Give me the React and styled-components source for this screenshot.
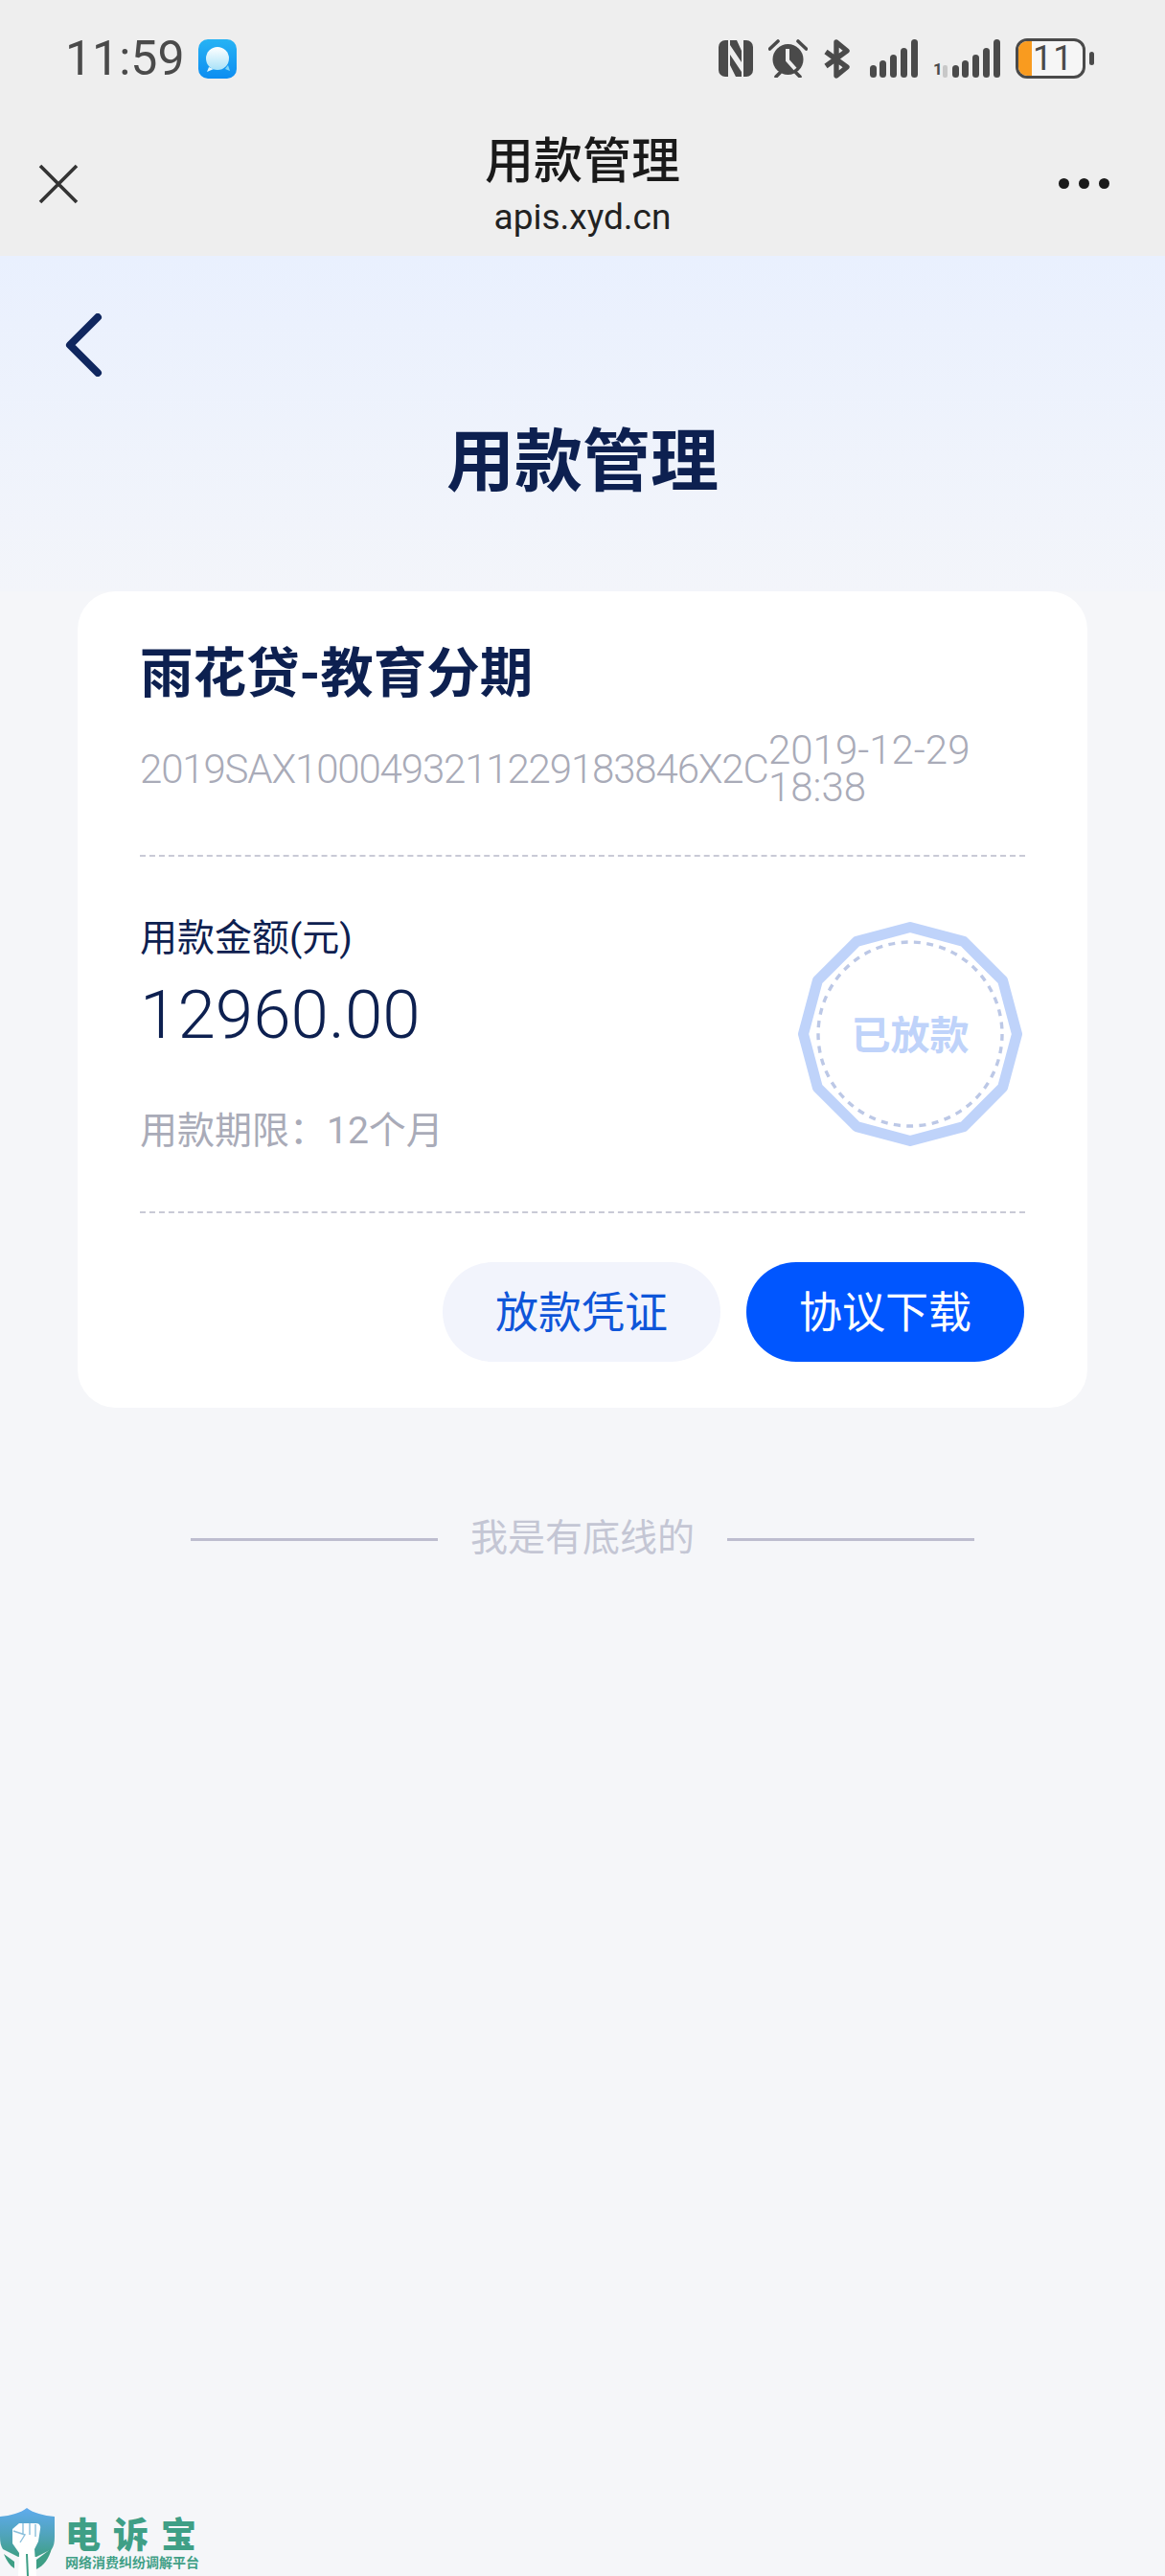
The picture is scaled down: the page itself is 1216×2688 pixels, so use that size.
import React from 'react';
import styled, { createGlobalStyle } from 'styled-components';

const FONT = '"Roboto", "Noto Sans CJK SC", sans-serif';

const GlobalStyle = createGlobalStyle`
  html, body {
    margin: 0;
    padding: 0;
    background: #f5f6f9;
  }
  * {
    box-sizing: border-box;
  }
`;

const Bars = () => (
  <g fill="#4a4a4a">
    <rect x="0" y="27" width="7" height="13" rx="3.5" />
    <rect x="10" y="22" width="7" height="18" rx="3.5" />
    <rect x="21" y="16" width="7" height="24" rx="3.5" />
    <rect x="32" y="9" width="7" height="31" rx="3.5" />
    <rect x="43" y="0" width="7" height="40" rx="3.5" />
  </g>
);

const NfcIcon = () => (
  <svg width="36" height="38" viewBox="0 0 36 38">
    <path d="M7 0h3v38H7a7 7 0 0 1-7-7V7a7 7 0 0 1 7-7z" fill="#4a4a4a" />
    <path d="M29 0h-3v38h3a7 7 0 0 0 7-7V7a7 7 0 0 0-7-7z" fill="#4a4a4a" />
    <path d="M12 0h7l5 11v12L12 5zM12 15l12 18v5h-6l-6-12z" fill="#4a4a4a" />
  </svg>
);

const AlarmIcon = () => (
  <svg width="41" height="40" viewBox="0 0 41 40">
    <circle cx="20.5" cy="21" r="16" fill="#4a4a4a" />
    <path d="M20 10v12l8 9" fill="none" stroke="#eeeeee" strokeWidth="4" />
    <path d="M1.5 10 10 2M39.5 10 31 2M8 39l4-4M33 39l-4-4" fill="none" stroke="#4a4a4a" strokeWidth="3.6" strokeLinecap="round" />
  </svg>
);

const BluetoothIcon = () => (
  <svg width="33" height="41" viewBox="0 0 33 41">
    <path d="M3 13 25 29 14 38V3l11 9L3 28" fill="none" stroke="#4a4a4a" strokeWidth="5.4" strokeLinejoin="round" />
  </svg>
);

const SignalIcon = () => (
  <svg width="50" height="40" viewBox="0 0 50 40">
    <Bars />
  </svg>
);

const CloseIcon = () => (
  <svg width="42" height="42" viewBox="0 0 42 42">
    <path d="M2 2 40 40M40 2 2 40" fill="none" stroke="#333333" strokeWidth="3.6" />
  </svg>
);

const MessageBadge = () => (
  <svg width="40" height="41" viewBox="0 0 40 41">
    <defs>
      <linearGradient id="badgeBg" x1="0" y1="0" x2="0" y2="1">
        <stop offset="0" stopColor="#27b3f4" />
        <stop offset="1" stopColor="#0d8df1" />
      </linearGradient>
      <linearGradient id="bubbleBg" x1="0" y1="0" x2="0" y2="1">
        <stop offset="0" stopColor="#ffffff" />
        <stop offset="1" stopColor="#a8e2f8" />
      </linearGradient>
    </defs>
    <rect width="40" height="41" rx="10" fill="url(#badgeBg)" />
    <path d="M28 31l5 2-2-6z" fill="#7fd6f6" />
    <path d="M11 29l-2 5 7-3z" fill="#e3f6fd" />
    <ellipse cx="20" cy="20" rx="12" ry="12" fill="url(#bubbleBg)" />
  </svg>
);

const BackChevron = () => (
  <svg width="42" height="66" viewBox="0 0 42 66">
    <path d="M34 4 5 33l29 29" fill="none" stroke="#10275f" strokeWidth="8" strokeLinecap="round" strokeLinejoin="round" />
  </svg>
);

const STAMP_POINTS = Array.from({ length: 12 }, (_, i) => {
  const a = (i * Math.PI) / 6;
  return `${(118 + 111.5 * Math.sin(a)).toFixed(1)},${(118 - 111.5 * Math.cos(a)).toFixed(1)}`;
}).join(' ');

const StampArt = () => (
  <svg width="236" height="236" viewBox="0 0 236 236">
    <polygon points={STAMP_POINTS} fill="none" stroke="#bfd3fa" strokeWidth="11" strokeLinejoin="round" />
    <circle cx="118" cy="118" r="96" fill="none" stroke="#bcc8e6" strokeWidth="3.4" strokeDasharray="7 6.4" />
  </svg>
);

const ShieldLogo = () => (
  <svg width="58" height="71" viewBox="0 0 58 71">
    <defs>
      <linearGradient id="shieldBg" x1="0" y1="0" x2="0" y2="1">
        <stop offset="0" stopColor="#5fabee" />
        <stop offset="0.6" stopColor="#4fa3b6" />
        <stop offset="1" stopColor="#3f9f86" />
      </linearGradient>
    </defs>
    <path d="M28 0C34 5 46 8 57 9V30C57 36 56 40 54 43L38 51H19L3 43C1 40 0 36 0 30V9C11 8 22 5 28 0Z" fill="url(#shieldBg)" />
    <path d="M4 48 15 56V63C10 60 7 55 4 48ZM54 42C51 53 46 60 38 64V54Z" fill="#3f9f86" />
    <path d="M13 22 20 16H38C41 16 43 19 42 22L40 35 36 43 38 71H19L20 47 13 37Z" fill="#ffffff" />
    <path d="M24 16V28M31 16V28M37 17V30M14 24 26 28 21 36" fill="none" stroke="#8cc0dc" strokeWidth="1.4" />
    <path d="M28 48 29 71" fill="none" stroke="#3f9f86" strokeWidth="2" />
  </svg>
);

const App = () => (
  <Page>
    <GlobalStyle />
    <Chrome>
      <StatusBar>
        <StatusLeft>
          <Clock>11:59</Clock>
          <MessageBadge />
        </StatusLeft>
        <StatusRight>
          <NfcIcon />
          <AlarmIcon />
          <BluetoothIcon />
          <SignalIcon />
          <SignalData>
            <SimSlot>1</SimSlot>
            <SimArrow />
            <SignalIcon />
          </SignalData>
          <Battery>
            <BatteryBody>
              <BatteryFill />
              <BatteryLevel>11</BatteryLevel>
            </BatteryBody>
            <BatteryTip />
          </Battery>
        </StatusRight>
      </StatusBar>
      <NavBar>
        <NavSide>
          <CloseIcon />
        </NavSide>
        <NavCenter>
          <NavTitle>用款管理</NavTitle>
          <NavUrl>apis.xyd.cn</NavUrl>
        </NavCenter>
        <NavSide $right>
          <Dots>
            <Dot />
            <Dot />
            <Dot />
          </Dots>
        </NavSide>
      </NavBar>
    </Chrome>

    <Hero>
      <BackRow>
        <BackChevron />
      </BackRow>
      <HeroTitle>用款管理</HeroTitle>
    </Hero>

    <Card>
      <CardHead>
        <LoanName>雨花贷-教育分期</LoanName>
        <SerialRow>
          <Serial>2019SAX1000493211229183846X2C</Serial>
          <DateText>2019-12-29 18:38</DateText>
        </SerialRow>
      </CardHead>
      <CardBody>
        <Amounts>
          <AmountLabel>用款金额(元)</AmountLabel>
          <AmountValue>12960.00</AmountValue>
          <Term>用款期限：12个月</Term>
        </Amounts>
        <Stamp>
          <StampArt />
          <StampLabel>已放款</StampLabel>
        </Stamp>
      </CardBody>
      <CardActions>
        <ActionButton>放款凭证</ActionButton>
        <ActionButton $primary>协议下载</ActionButton>
      </CardActions>
    </Card>

    <Baseline>
      <BaselineRule />
      <BaselineText>我是有底线的</BaselineText>
      <BaselineRule />
    </Baseline>

    <Watermark>
      <ShieldLogo />
      <WatermarkText>
        <WatermarkName>电诉宝</WatermarkName>
        <WatermarkSlogan>网络消费纠纷调解平台</WatermarkSlogan>
      </WatermarkText>
    </Watermark>
  </Page>
);
export default App;

const Page = styled.div`
  position: relative;
  width: 1216px;
  height: 2688px;
  overflow: hidden;
  background: #f5f6f9;
  font-family: ${FONT};
`;

const Chrome = styled.header`
  height: 267px;
  background: #eeeeee;
`;

const StatusBar = styled.div`
  display: flex;
  align-items: center;
  justify-content: space-between;
  height: 122px;
  padding: 0 74px 0 68px;
`;

const StatusLeft = styled.div`
  display: flex;
  align-items: center;
  gap: 14px;
`;

const Clock = styled.span`
  font-size: 50px;
  line-height: 1;
  color: #4a4a4a;
`;

const StatusRight = styled.div`
  display: flex;
  align-items: center;
  gap: 16px;
`;

const SignalData = styled.div`
  display: flex;
  align-items: flex-end;
  height: 40px;
`;

const SimSlot = styled.span`
  width: 10px;
  font-size: 17px;
  font-weight: 700;
  line-height: 17px;
  color: #4a4a4a;
`;

const SimArrow = styled.span`
  width: 5px;
  height: 13px;
  margin-right: 5px;
  border-radius: 2px;
  background: #c8c8c8;
`;

const Battery = styled.div`
  display: flex;
  align-items: center;
  gap: 4px;
`;

const BatteryBody = styled.div`
  display: flex;
  align-items: center;
  width: 73px;
  height: 42px;
  overflow: hidden;
  border: 3.5px solid #4a4a4a;
  border-radius: 12px;
  background: #f6f6f6;
`;

const BatteryFill = styled.div`
  width: 14px;
  height: 100%;
  background: #f99b1f;
`;

const BatteryLevel = styled.span`
  margin-left: 1px;
  font-size: 36px;
  line-height: 1;
  color: #4a4a4a;
  letter-spacing: 1px;
`;

const BatteryTip = styled.div`
  width: 5px;
  height: 14px;
  border-radius: 3px;
  background: #4a4a4a;
`;

const NavBar = styled.nav`
  display: grid;
  grid-template-columns: 1fr auto 1fr;
  align-items: center;
  height: 145px;
`;

const NavSide = styled.div`
  display: flex;
  justify-content: ${props => (props.$right ? 'flex-end' : 'flex-start')};
  padding: ${props => (props.$right ? '0 58px 0 0' : '0 0 0 40px')};
  margin-top: -6px;
`;

const NavCenter = styled.div`
  display: flex;
  flex-direction: column;
  align-items: center;
  margin-top: -6px;
`;

const NavTitle = styled.div`
  font-size: 51px;
  font-weight: 500;
  line-height: 64px;
  color: #1a1a1a;
`;

const NavUrl = styled.div`
  margin-top: 6px;
  font-size: 37px;
  line-height: 40px;
  color: #222222;
`;

const Dots = styled.div`
  display: flex;
  gap: 10px;
`;

const Dot = styled.span`
  width: 11px;
  height: 11px;
  border-radius: 50%;
  background: #1a1a1a;
`;

const Hero = styled.section`
  height: 350px;
  padding: 60px 68px 0;
  background: linear-gradient(180deg, #e9f0fe 0%, #f3f5fa 100%);
`;

const BackRow = styled.div`
  display: flex;
  height: 66px;
`;

const HeroTitle = styled.h1`
  margin: 47px 0 0;
  font-size: 71px;
  font-weight: 700;
  line-height: 84px;
  text-align: center;
  color: #0d2050;
`;

const Card = styled.section`
  display: flex;
  flex-direction: column;
  width: 1054px;
  height: 852px;
  margin-left: 81px;
  padding: 0 65px;
  border-radius: 40px;
  background: #ffffff;
`;

const CardHead = styled.div`
  height: 277px;
  padding-top: 52px;
  border-bottom: 2px dashed #c9cad6;
`;

const LoanName = styled.h2`
  margin: 0;
  font-size: 55.5px;
  font-weight: 700;
  line-height: 70px;
  color: #0d2050;
`;

const SerialRow = styled.div`
  display: flex;
  align-items: center;
  margin-top: 24px;
`;

const Serial = styled.span`
  flex: none;
  width: 656px;
  font-size: 42px;
  font-weight: 300;
  letter-spacing: -1.15px;
  color: #a9abb8;
  white-space: nowrap;
`;

const DateText = styled.span`
  width: 230px;
  font-size: 42px;
  font-weight: 300;
  line-height: 39px;
  color: #a9abb8;
`;

const CardBody = styled.div`
  display: flex;
  align-items: center;
  justify-content: space-between;
  height: 372px;
  border-bottom: 2px dashed #c9cad6;
`;

const Amounts = styled.div`
  display: flex;
  flex-direction: column;
`;

const AmountLabel = styled.div`
  font-size: 39px;
  line-height: 48px;
  color: #0d2050;
`;

const AmountValue = styled.div`
  margin-top: 12px;
  font-size: 71px;
  font-weight: 300;
  line-height: 88px;
  color: #0d2050;
`;

const Term = styled.div`
  margin-top: 53px;
  font-size: 39px;
  line-height: 48px;
  color: #a9abb8;
`;

const Stamp = styled.div`
  position: relative;
  display: grid;
  place-items: center;
  width: 236px;
  height: 236px;
  margin-right: 2px;
`;

const StampLabel = styled.span`
  position: absolute;
  margin-top: -4px;
  font-size: 41px;
  font-weight: 700;
  color: #bfd3fa;
`;

const CardActions = styled.div`
  display: flex;
  justify-content: flex-end;
  gap: 27px;
  padding: 51px 1px 0 0;
`;

const ActionButton = styled.button`
  width: 290px;
  height: 104px;
  padding: 0 0 6px;
  border: 0;
  border-radius: 52px;
  font-family: ${FONT};
  font-size: 45px;
  color: ${props => (props.$primary ? '#ffffff' : '#0f56d9')};
  background: ${props => (props.$primary ? '#0056ff' : '#f2f4fc')};
`;

const Baseline = styled.div`
  display: flex;
  align-items: center;
  justify-content: center;
  gap: 34px;
  margin-top: 112px;
`;

const BaselineRule = styled.span`
  width: 258px;
  height: 3px;
  margin-top: 2px;
  background: #bdbdcf;
`;

const BaselineText = styled.span`
  font-size: 39px;
  line-height: 48px;
  color: #c4c6d4;
`;

const Watermark = styled.div`
  position: absolute;
  left: 0;
  bottom: 0;
  display: flex;
  align-items: flex-start;
  gap: 10px;
`;

const WatermarkText = styled.div`
  display: flex;
  flex-direction: column;
  margin-top: 12px;
`;

const WatermarkName = styled.div`
  font-size: 37px;
  font-weight: 900;
  line-height: 36px;
  letter-spacing: 13px;
  color: #3f9f86;
`;

const WatermarkSlogan = styled.div`
  font-size: 14px;
  font-weight: 700;
  line-height: 18px;
  color: #3f9f86;
  white-space: nowrap;
`;
